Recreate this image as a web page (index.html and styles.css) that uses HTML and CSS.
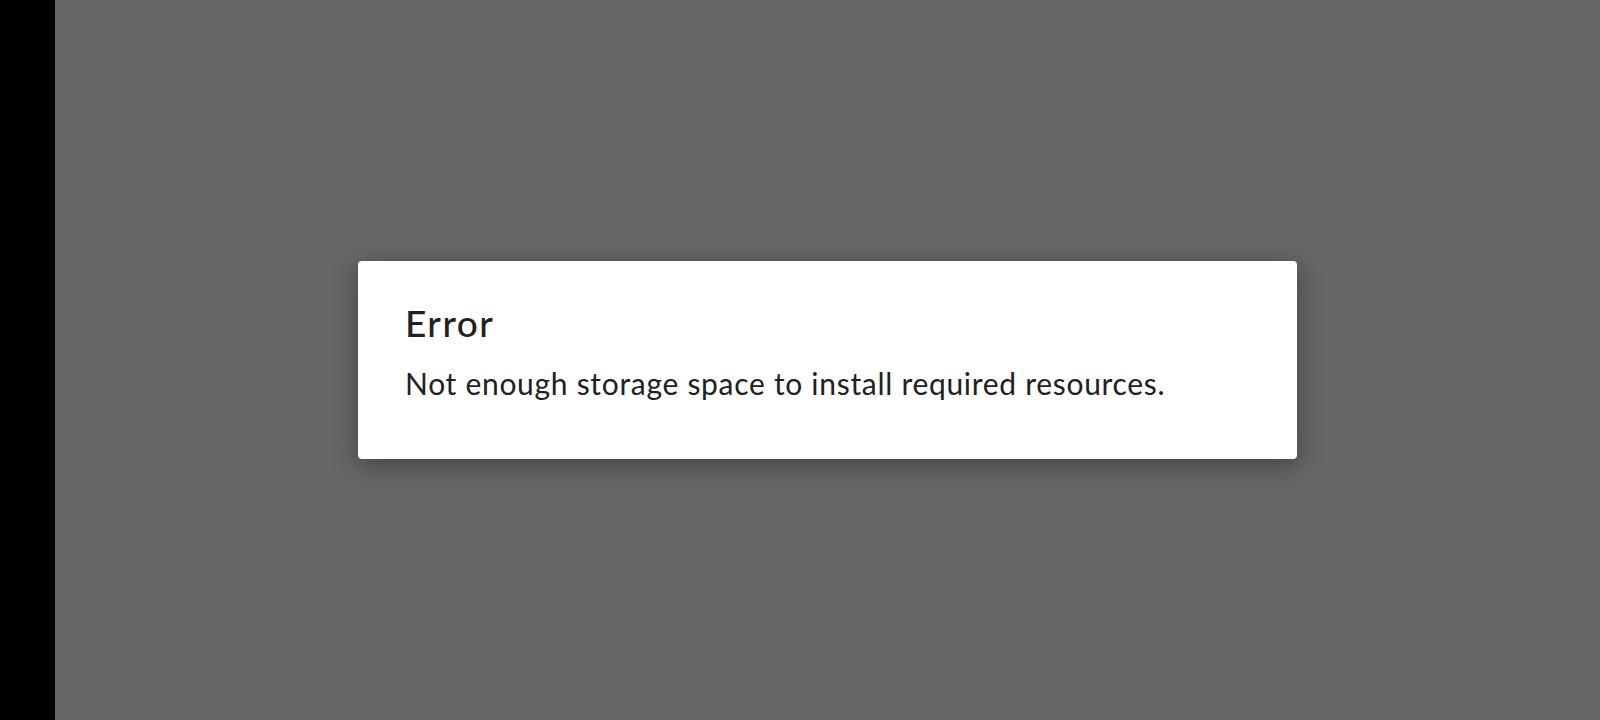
FILE: index.html
```html
<!DOCTYPE html>
<html lang="en">
<head>
  <meta charset="UTF-8">
  <title>Error</title>
  <link rel="stylesheet" href="styles.css">
</head>
<body>
  <div class="side"></div>
  <div class="screen">
    <div class="dialog">
      <h1 class="title">Error</h1>
      <p class="message">Not enough storage space to install required resources.</p>
    </div>
  </div>
</body>
</html>
```
FILE: styles.css
```css
html,
body {
  margin: 0;
  height: 100%;
}
body {
  display: flex;
  font-family: "Lato", "Open Sans", sans-serif;
  color: #212121;
}
.side {
  width: 55px;
  background-color: #000;
}
.screen {
  flex: 1;
  display: flex;
  align-items: center;
  justify-content: center;
  background-color: #666;
}
.dialog {
  box-sizing: border-box;
  width: 939px;
  height: 198px;
  padding: 38px 47px 0;
  background-color: #fff;
  border-radius: 4px;
  box-shadow: 0 6px 24px rgba(0, 0, 0, 0.35);
}
.title {
  margin: 0;
  font-size: 37px;
  font-weight: 500;
  line-height: 48px;
  letter-spacing: 1.5px;
}
.message {
  margin: 16px 0 0;
  font-size: 30px;
  line-height: 40px;
  letter-spacing: 0.7px;
}
```
